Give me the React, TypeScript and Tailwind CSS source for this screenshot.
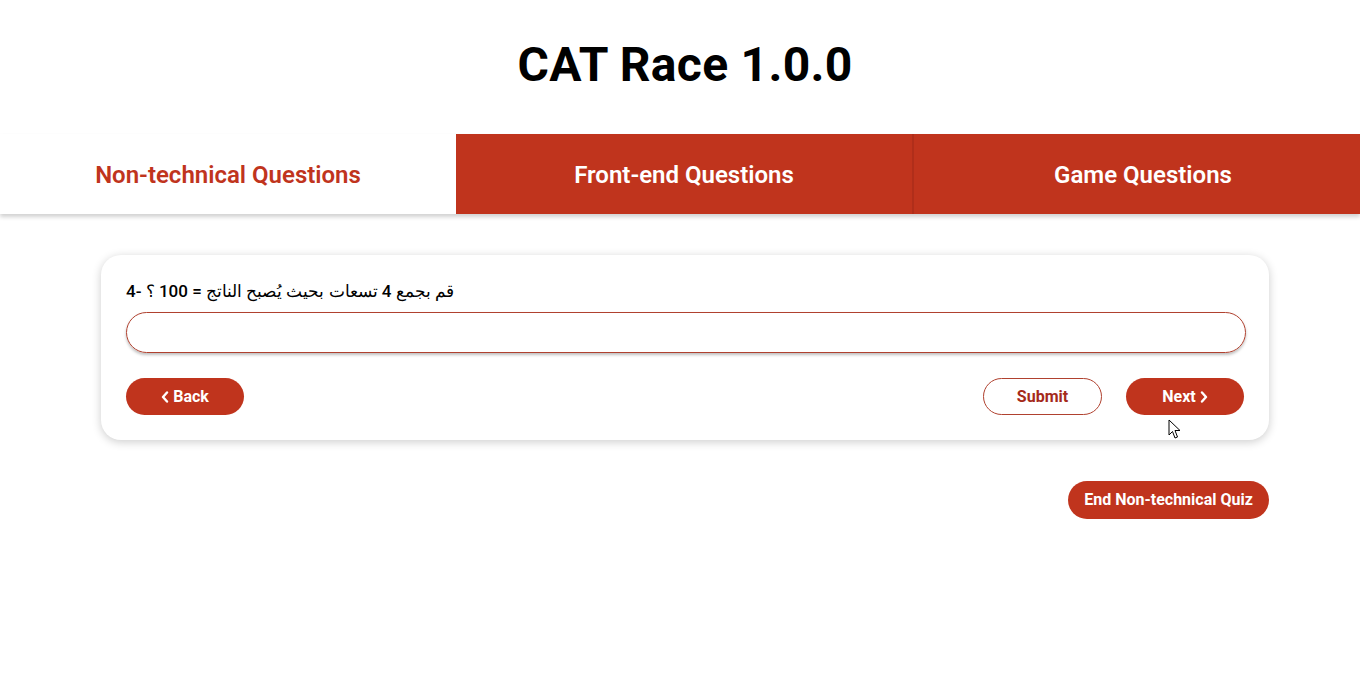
import React from "react";

const RED = "bg-[#c0341d]";

function Chevron({ dir }: { dir: "left" | "right" }) {
  return (
    <svg width="8" height="12" viewBox="0 0 8 12" className="inline-block">
      {dir === "left" ? (
        <path d="M6 1.5 L2 6 L6 10.5" fill="none" stroke="white" strokeWidth="2.4" strokeLinecap="round" strokeLinejoin="round" />
      ) : (
        <path d="M2 1.5 L6 6 L2 10.5" fill="none" stroke="white" strokeWidth="2.4" strokeLinecap="round" strokeLinejoin="round" />
      )}
    </svg>
  );
}

export default function App() {
  return (
    <div className="relative min-h-[687px] bg-white font-['Roboto','Noto_Sans',sans-serif] text-black">
      <header className="h-[134px] pt-[38px] pl-[10px] flex justify-center">
        <h1 className="text-[48px] leading-[54px] font-bold tracking-[0.3px]">CAT Race 1.0.0</h1>
      </header>

      <nav className="flex h-[80px] shadow-[0_3px_4px_rgba(0,0,0,0.18)]">
        <div className="w-[456px] pt-[2px] flex items-center justify-center bg-white text-[#c0341d] text-[24px] font-semibold">
          Non-technical Questions
        </div>
        <div className={`w-[456px] pt-[2px] flex items-center justify-center ${RED} text-white text-[24px] font-semibold`}>
          Front-end Questions
        </div>
        <div className={`flex-1 pt-[2px] flex items-center justify-center ${RED} border-l-2 border-[#b02e1a] pl-[12px] text-white text-[24px] font-semibold`}>
          Game Questions
        </div>
      </nav>

      <main className="ml-[101px] mr-[91px] mt-[41px]">
        <section className="rounded-[20px] bg-white pl-[25px] pr-[23px] pt-[24px] pb-[25px] shadow-[0_2px_10px_rgba(0,0,0,0.2)]">
          <p className="text-[17px] leading-[24px] font-medium" dir="ltr">
            4- قم بجمع 4 تسعات بحيث يُصبح الناتج = 100 ؟
          </p>
          <input
            type="text"
            className="mt-[9px] block w-full h-[41px] rounded-full border border-[#b0412f] px-4 outline-none shadow-[0_2px_3px_rgba(0,0,0,0.25)]"
          />
          <div className="mt-[25px] flex items-center">
            <button className={`w-[118px] h-[37px] rounded-full ${RED} text-white text-[16px] font-bold flex items-center justify-center gap-[4px]`}>
              <Chevron dir="left" />
              Back
            </button>
            <div className="ml-auto flex gap-[24px] mr-[2px]">
              <button className="w-[119px] h-[37px] rounded-full border border-[#b0412f] bg-white text-[#a52a1a] text-[16px] font-bold">
                Submit
              </button>
              <button className={`w-[118px] h-[37px] rounded-full ${RED} text-white text-[16px] font-bold flex items-center justify-center gap-[4px]`}>
                Next
                <Chevron dir="right" />
              </button>
            </div>
          </div>
        </section>

        <div className="mt-[41px] flex justify-end">
          <button className={`w-[201px] h-[38px] rounded-full ${RED} text-white text-[16px] font-bold`}>
            End Non-technical Quiz
          </button>
        </div>
      </main>

      <svg className="absolute left-[1168px] top-[419px]" width="14" height="21" viewBox="0 0 14 21">
        <path d="M1 1 L1 16 L4.5 12.5 L7 19 L9.5 18 L7 11.5 L12 11.5 Z" fill="white" stroke="black" strokeWidth="1" strokeLinejoin="round" />
      </svg>
    </div>
  );
}
